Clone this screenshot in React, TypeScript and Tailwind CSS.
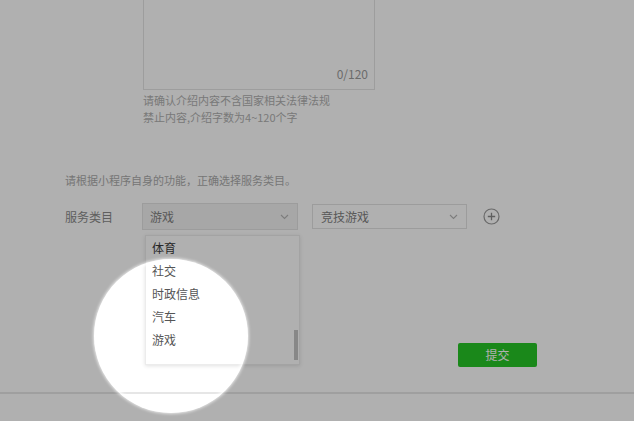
import React from 'react';

const font = { fontFamily: '"Noto Sans CJK SC", "Noto Sans", sans-serif' };

function Chevron() {
  return (
    <svg width="9" height="6" viewBox="0 0 9 6" fill="none">
      <path d="M1 1l3.5 3.5L8 1" stroke="#b5b5b5" strokeWidth="1.1" />
    </svg>
  );
}

function PlusCircle() {
  return (
    <svg width="17" height="17" viewBox="0 0 17 17" fill="none">
      <circle cx="8.5" cy="8.5" r="7.5" stroke="#9a9a9a" strokeWidth="1.2" />
      <path d="M8.5 4.8v7.4M4.8 8.5h7.4" stroke="#8a8a8a" strokeWidth="1.3" />
    </svg>
  );
}

const items = ['体育', '社交', '时政信息', '汽车', '游戏'];

export default function App() {
  return (
    <div className="relative w-[634px] h-[421px] overflow-hidden bg-white" style={font}>
      <div className="flex flex-col">
        {/* textarea */}
        <div className="ml-[143px] -mt-[10px] w-[232px] h-[100px] border border-[#e4e4e4] flex flex-col justify-end items-end pr-[6px] pb-[8px]">
          <span className="text-[12px] leading-[14px] text-[#9c9c9c]">0/120</span>
        </div>
        <div className="ml-[143px] mt-[2px] text-[11px] leading-[17px] text-[#b0b0b0]">
          <p>请确认介绍内容不含国家相关法律法规</p>
          <p>禁止内容,介绍字数为4~120个字</p>
        </div>

        <p className="ml-[65px] mt-[45px] text-[11px] leading-[18px] text-[#ababab]">
          请根据小程序自身的功能，正确选择服务类目。
        </p>

        <div className="mt-[14px] flex items-center h-[27px]">
          <span className="ml-[65px] w-[77px] text-[12px] text-[#8a8a8a]">服务类目</span>
          <div className="relative w-[156px] h-[27px] bg-[#f2f2f2] border border-[#e2e2e2] flex items-center justify-between pl-[7px] pr-[8px]">
            <span className="text-[12px] text-[#808080]">游戏</span>
            <Chevron />
            <div className="absolute left-[2px] top-[31px] w-[155px] h-[130px] bg-white border border-[#ececec] shadow-[0_1px_4px_rgba(0,0,0,0.12)]">
              {items.map((t, i) => (
                <div
                  key={t}
                  className={
                    'h-[23px] flex items-center pl-[6px] text-[12px] ' +
                    (i === 0 ? 'text-[#3a3a3a]' : 'text-[#555]')
                  }
                >
                  {t}
                </div>
              ))}
              <div className="absolute right-[1px] top-[94px] w-[4px] h-[30px] bg-[#c4c4c4]" />
            </div>
          </div>
          <div className="ml-[14px] w-[155px] h-[25px] bg-white border border-[#e2e2e2] flex items-center justify-between pl-[8px] pr-[8px]">
            <span className="text-[12px] text-[#808080]">竞技游戏</span>
            <Chevron />
          </div>
          <div className="ml-[16px] flex items-center">
            <PlusCircle />
          </div>
        </div>

        <div className="mt-[113px] ml-[458px] w-[79px] h-[24px] rounded-[2px] bg-[#27c527] flex items-center justify-center text-[12px] text-white">
          提交
        </div>

        <div className="mt-[25px] border-t-2 border-[#e6e6e6]" />
      </div>

      {/* spotlight overlay */}
      <div className="absolute left-[94px] top-[259px] w-[154px] h-[154px] rounded-full shadow-[inset_0_0_3px_2px_rgba(255,255,255,0.9),0_0_3px_1px_rgba(255,255,255,0.7),0_0_0_1200px_rgba(0,0,0,0.31)]" />
    </div>
  );
}
